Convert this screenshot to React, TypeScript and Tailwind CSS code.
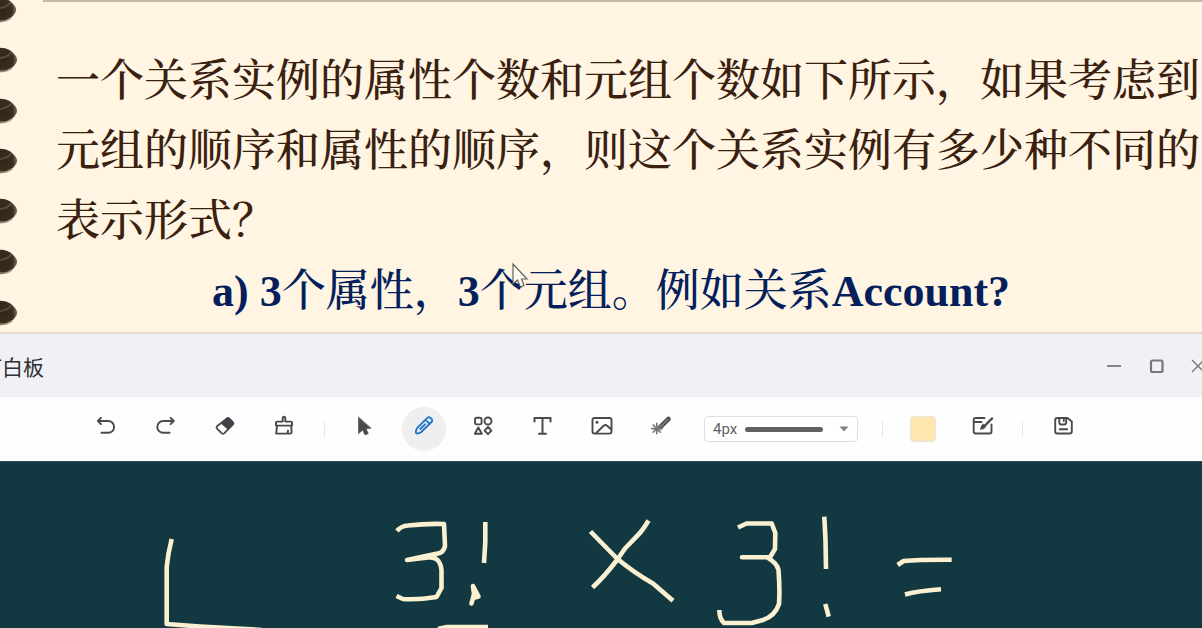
import type { ReactNode } from "react";

const RING_CENTERS = [10, 60, 111, 161, 211, 262, 313];

function BinderRings() {
  return (
    <svg className="absolute left-0 top-0 h-[334px] w-6" viewBox="0 0 24 334" aria-hidden="true">
      <defs>
        <radialGradient id="ring" cx="0.3" cy="0.5" r="0.7">
          <stop offset="0" stopColor="#30251a" />
          <stop offset="0.7" stopColor="#3b2d20" />
          <stop offset="1" stopColor="#83735f" />
        </radialGradient>
      </defs>
      {RING_CENTERS.map((cy, i) => (
        <g key={cy} transform={`translate(${i > 0 ? 1 : 0} ${cy})`}>
          <path d="M-4 -12 C5 -13 10 -10 14 -5 C17 -1 17 1 13 6 C8 11 1 13 -4 12 Z" fill="url(#ring)" />
          <path d="M-2 -2 C3 -2 7 -4 10 -7" stroke="#6e6050" strokeWidth="2" fill="none" strokeLinecap="round" opacity="0.6" />
          <path d="M-2 11 C3 12 7 11 11 8" stroke="#a89a84" strokeWidth="2" fill="none" opacity="0.7" />
        </g>
      ))}
    </svg>
  );
}

function Icon({ children, className = "text-[#4a4a4c]" }: { children: ReactNode; className?: string }) {
  return (
    <svg
      className={`size-6 ${className}`}
      viewBox="0 0 24 24"
      fill="none"
      stroke="currentColor"
      strokeWidth="1.9"
      strokeLinecap="round"
      strokeLinejoin="round"
      aria-hidden="true"
    >
      {children}
    </svg>
  );
}

function ToolButton({ label, active = false, children }: { label: string; active?: boolean; children: ReactNode }) {
  return (
    <button
      type="button"
      aria-label={label}
      aria-pressed={active}
      className={`flex h-11 w-11 shrink-0 justify-center rounded-full pt-2 ${active ? "bg-[#efeff0]" : ""}`}
    >
      {children}
    </button>
  );
}

function Divider() {
  return <span className="mx-[18px] h-4 w-px shrink-0 bg-[#e8e8ea]" />;
}

function Slide() {
  return (
    <section className="relative h-[334px] overflow-hidden border-b-2 border-[#e6dcc5] bg-[#fff5e2]">
      <div className="ml-[43px] h-[2px] bg-[#c5b9a4]" />
      <BinderRings />
      <div className="whitespace-nowrap pl-14 pt-[45px] font-['Liberation_Serif','Noto_Serif_CJK_SC','Noto_Sans_CJK_SC',serif] text-[44px] font-medium leading-[70px] text-[#3a200f]">
        <p>一个关系实例的属性个数和元组个数如下所示，如果考虑到</p>
        <p>元组的顺序和属性的顺序，则这个关系实例有多少种不同的</p>
        <p>表示形式？</p>
        <p className="pl-[156px] text-[#051f5c]">
          <b>a) 3</b>个属性，<b>3</b>个元组。例如关系<b>Account?</b>
        </p>
      </div>
      <svg className="absolute left-[511px] top-[262px] h-7 w-[18px]" viewBox="0 0 18 28" aria-hidden="true">
        <path d="M2 2 V22 L6.5 18 L9.5 25 L13 23.5 L10.5 17 H16 Z" fill="#fdf8f0" stroke="#62605f" strokeWidth="1.2" />
      </svg>
    </section>
  );
}

function TitleBar() {
  return (
    <header className="flex h-[63px] items-center justify-between overflow-hidden bg-[#f0f1f4]">
      <h1 className="flex w-11 justify-end overflow-hidden whitespace-nowrap font-['Noto_Sans_CJK_SC',sans-serif] text-[21px] leading-8 text-[#2e2f33]">
        钉白板
      </h1>
      <div className="-mr-2 flex items-center gap-[18px] text-[#77787b]">
        <button type="button" aria-label="最小化" className="size-6">
          <svg viewBox="0 0 24 24" className="size-6" stroke="currentColor" strokeWidth="1.8">
            <path d="M5 12 H19" />
          </svg>
        </button>
        <button type="button" aria-label="最大化" className="size-6">
          <svg viewBox="0 0 24 24" className="size-6" fill="none" stroke="currentColor" strokeWidth="2.2">
            <rect x="7" y="6.5" width="11.5" height="11.5" rx="1.5" />
          </svg>
        </button>
        <button type="button" aria-label="关闭" className="size-6">
          <svg viewBox="0 0 24 24" className="size-6" stroke="currentColor" strokeWidth="1.4">
            <path d="M6 6 L18 18 M18 6 L6 18" />
          </svg>
        </button>
      </div>
    </header>
  );
}

function StrokeWidthSelect() {
  return (
    <div className="ml-[22px] mr-1.5 grid h-[26px] w-[154px] shrink-0 items-center rounded border border-[#dfdfe1] bg-white">
      <select
        aria-label="线条粗细"
        defaultValue="4"
        className="col-start-1 row-start-1 h-6 w-full appearance-none bg-transparent pl-2 font-['Roboto',sans-serif] text-[15px] text-[#606063]"
      >
        <option value="2">2px</option>
        <option value="4">4px</option>
        <option value="8">8px</option>
      </select>
      <span className="pointer-events-none col-start-1 row-start-1 flex items-center justify-between pl-10 pr-2">
        <span className="h-[5px] w-[78px] rounded-full bg-[#616162]" />
        <svg className="h-[6px] w-[10px]" viewBox="0 0 10 6" fill="#848487" aria-hidden="true">
          <path d="M0.5 0.5 H9.5 L5 5.5 Z" />
        </svg>
      </span>
    </div>
  );
}

function Toolbar() {
  return (
    <div className="flex h-16 items-center bg-[#fefefe] pl-[85px]" role="toolbar" aria-label="白板工具">
      <div className="flex gap-[15px]">
        <ToolButton label="撤销">
          <Icon>
            <path d="M6 2.8 L2.8 6 L6 9.2 M3.2 6 H13.2 A5.7 5.7 0 0 1 13.2 17.8 H6.5" />
          </Icon>
        </ToolButton>
        <ToolButton label="重做">
          <Icon>
            <path d="M16.6 2.8 L19.8 6 L16.6 9.2 M19.4 6 H9.2 A5.7 5.7 0 0 0 9.2 17.8 H15.6" />
          </Icon>
        </ToolButton>
        <ToolButton label="橡皮擦">
          <Icon>
            <path d="M13.6 3.7 Q15 2.3 16.4 3.7 L19.8 7.1 Q21 8.3 19.8 9.5 L11.4 18.2 Q10 19.5 8.6 18.2 L4 13.6 Q2.9 12.5 4 11.3 Z" strokeWidth="1.8" />
            <path d="M13.6 3.7 Q15 2.3 16.4 3.7 L19.8 7.1 Q21 8.3 19.8 9.5 L15 14.3 L8.6 8.6 Z" fill="#41424a" stroke="#41424a" strokeWidth="1" />
          </Icon>
        </ToolButton>
        <ToolButton label="清空">
          <Icon>
            <path d="M10.7 6.6 V3 Q10.7 1.8 12 1.8 T13.3 3 V6.6 H19 Q20 6.6 20 7.6 V10.6 H4 V7.6 Q4 6.6 5 6.6 Z M5 10.6 L4.2 18.6 H18 Q19.8 18.6 19.6 16.8 L19.2 10.6 M15.3 18.3 Q16 17.5 16 15.5" strokeWidth="1.9" />
          </Icon>
        </ToolButton>
      </div>
      <Divider />
      <div className="flex gap-[15px]">
        <ToolButton label="选择">
          <Icon>
            <path d="M5.5 2.2 V18.8 L9.6 15 L12 20 L15.3 18.5 L13 13.8 L17.8 13.2 Z" fill="currentColor" strokeWidth="0.6" />
          </Icon>
        </ToolButton>
        <ToolButton label="画笔" active>
          <Icon className="text-[#2576c9]">
            <path d="M15.6 2.7 Q17 1.7 18.2 2.8 L19.8 4.3 Q20.9 5.5 19.8 6.8 L9 17.3 Q6.5 19 4.2 18.2 Q3.4 15.5 5 13.2 Z M13.6 4.8 L17.6 8.8 M8.3 14 L13 9.3" />
          </Icon>
        </ToolButton>
        <ToolButton label="图形">
          <Icon>
            <rect x="4" y="2.8" width="6.6" height="6.6" rx="1.8" />
            <circle cx="17" cy="6" r="3.5" />
            <path d="M7.3 12.4 L10.8 18.8 H3.8 Z M17 12 L20.4 15.6 L17 19.2 L13.6 15.6 Z" />
          </Icon>
        </ToolButton>
        <ToolButton label="文本">
          <Icon>
            <path d="M4.5 6.5 V3 H20.5 V6.5 M12.5 3 V18.7 M9 18.7 H16" strokeWidth="2" />
          </Icon>
        </ToolButton>
        <ToolButton label="图片">
          <Icon>
            <rect x="3.5" y="3" width="19" height="15.6" rx="2" />
            <circle cx="8" cy="7.2" r="1.5" fill="currentColor" stroke="none" />
            <path d="M7 18.2 L14.6 10.8 Q16.4 9.4 18.2 10.8 L22 14.2" />
          </Icon>
        </ToolButton>
        <ToolButton label="激光笔">
          <Icon>
            <path d="M20.4 4 L12.2 12.2" strokeWidth="4.6" />
            <path d="M19.8 4.6 L12.8 11.6" stroke="#858588" strokeWidth="1.4" />
            <path d="M8.8 8.4 V18.6 M3.8 13.6 H14 M5.2 10 L12.4 17.2 M12 10.4 L5.2 17.2" stroke="#77777a" strokeWidth="1.7" strokeDasharray="2.2 1" />
          </Icon>
        </ToolButton>
      </div>
      <StrokeWidthSelect />
      <Divider />
      <div className="flex items-center gap-[15px]">
        <button type="button" aria-label="画笔颜色" className="flex w-11 justify-center">
          <span className="size-[26px] rounded border-2 border-[#f3e4cd] bg-[#ffe6ae]" />
        </button>
        <ToolButton label="背景">
          <Icon>
            <path d="M14.5 3 H5.7 Q3.7 3 3.7 5 V16.4 Q3.7 18.5 5.7 18.5 H19.5 Q21.5 18.5 21.5 16.4 V9.5 M3.8 7 H11.5" />
            <path d="M22 3.5 L14 11.5" strokeWidth="2.4" />
            <path d="M13 9.4 Q15.6 9.6 15.4 12.2 Q14.2 14.6 10 14.2 Q11.2 13 11.2 11.4 Q11.6 9.9 13 9.4 Z" fill="currentColor" strokeWidth="0.6" />
          </Icon>
        </ToolButton>
      </div>
      <Divider />
      <ToolButton label="保存">
        <Icon>
          <path d="M6.2 3 H16.5 L20.8 6.6 V16.4 Q20.8 18.5 18.8 18.5 H6.2 Q4.2 18.5 4.2 16.4 V5 Q4.2 3 6.2 3 Z M8.3 3.2 V7.2 Q8.3 9.5 10.5 9.5 H13 Q15.2 9.5 15.2 7.2 V3.2 M8.7 14.2 H16.2 M12.8 4.4 V6" strokeWidth="1.9" />
        </Icon>
      </ToolButton>
    </div>
  );
}

function Board() {
  return (
    <main className="flex-1 border-t border-[#2b4c55] bg-[#123941]">
      <svg className="block h-auto w-full" viewBox="0 462 1202 166" role="img" aria-label="手写算式">
        <g fill="none" stroke="#fbf0cf" strokeWidth="4.6" strokeLinejoin="round">
          <path d="M171.7 539 Q168 553 166.7 567 V624 L200 626.5 L262 630" />
          <path d="M438 629 L447 627 H488" />
          <path d="M397 531 Q401 526 408 525.5 Q425 523.5 444 524 L445 546 Q444 551 440 553 L407 560 L428 557.5 Q440 556 441.5 570 V588 L436.5 597 Q418 600 403 599 L396.5 596" />
          <path d="M485.3 522 V542 L484 563" />
          <path d="M473 586 L478.5 596.5 L473 598 L471.5 603.5 L474 594 Z" fill="#fbf0cf" />
          <path d="M590.5 531.5 L617 558.5 Q633 572 653 583.5 L673 600.7" />
          <path d="M648.5 520.5 Q643 530 638 535 L625 548.5 L617 560 Q604 577 592.5 587.5" />
          <path d="M738 527.5 L746.5 523.5 H771.7 L775.3 533 L775 549 L770 557.3 H742 H767 Q777 563 778.5 570 Q780 590 779 604 Q775 616 763 620 L751.7 623 H724 Q719.5 619 719.3 610" />
          <path d="M824.3 516.7 L825.5 540 L826 569" />
          <path d="M825.3 604 L828.7 616.7" />
          <path d="M897.7 565 L903.5 561 Q920 559.5 951.7 559.7" />
          <path d="M905 594.5 Q918 591 941 589.3" />
        </g>
      </svg>
    </main>
  );
}

export default function App() {
  return (
    <div className="flex min-h-screen flex-col overflow-hidden">
      <Slide />
      <TitleBar />
      <Toolbar />
      <Board />
    </div>
  );
}
